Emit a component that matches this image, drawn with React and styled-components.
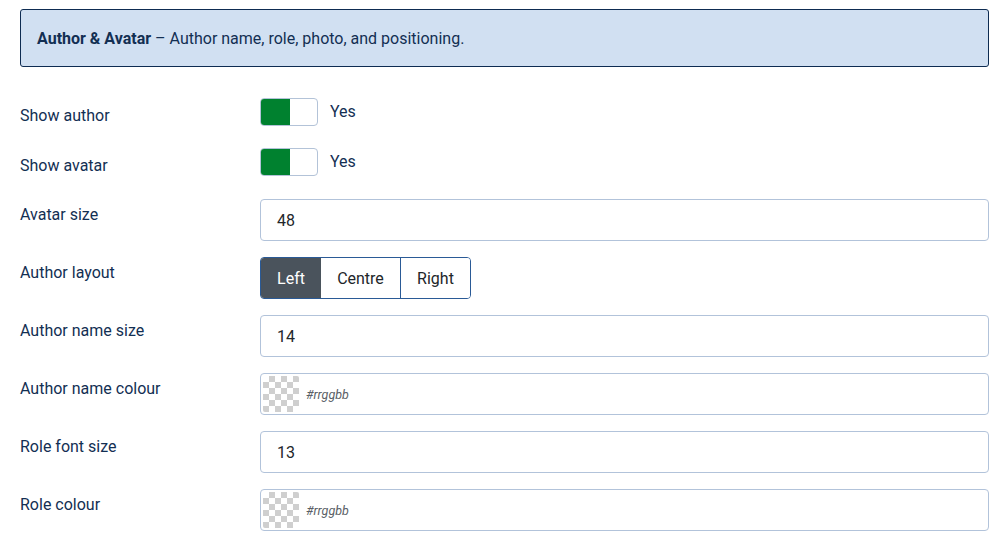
import React from "react";
import styled, { createGlobalStyle } from "styled-components";

const GlobalStyle = createGlobalStyle`
  html, body {
    margin: 0;
    padding: 0;
    background: #fff;
  }
  body {
    font-family: Roboto, "Liberation Sans", sans-serif;
    font-size: 16px;
    color: #132f53;
  }
`;

const Page = styled.div`
  padding: 9px 12px 0 20px;
`;

const Banner = styled.div`
  box-sizing: border-box;
  height: 58px;
  display: flex;
  align-items: center;
  padding: 0 16px;
  background-color: #d1e0f2;
  border: 1px solid #0e2c52;
  border-radius: 3px;
  font-size: 16px;
  color: #132f53;
  margin-bottom: 31px;

  strong {
    font-weight: 700;
  }
`;

const Row = styled.div`
  display: flex;
  align-items: flex-start;
  margin-bottom: ${(p) => p.$gap || 16}px;
`;

const Label = styled.label`
  width: 240px;
  flex: none;
  padding-top: ${(p) => p.$pad}px;
  line-height: 24px;
  font-size: 16px;
  color: #132f53;
`;

const Control = styled.div`
  flex: 1;
  display: flex;
  align-items: center;
`;

const Switch = styled.div`
  box-sizing: border-box;
  width: 58px;
  height: 28px;
  border: 1px solid #b3c3d8;
  border-radius: 4px;
  overflow: hidden;
  display: flex;
`;

const SwitchOn = styled.span`
  width: 29px;
  height: 100%;
  background-color: #00812f;
`;

const SwitchText = styled.span`
  margin-left: 12px;
  font-size: 16px;
  color: #132f53;
  line-height: 28px;
`;

const Input = styled.div`
  box-sizing: border-box;
  width: 100%;
  height: 42px;
  border: 1px solid #b2c3da;
  border-radius: 4px;
  display: flex;
  align-items: center;
  padding: 0 ${(p) => (p.$colour ? 2 : 16)}px;
  font-size: 16px;
  color: #22262a;
  background: #fff;
`;

const Swatch = styled.span`
  width: 36px;
  height: 36px;
  border-radius: 2px;
  background-color: #fff;
  background-image: linear-gradient(45deg, #cfcfcf 25%, transparent 25%),
    linear-gradient(-45deg, #cfcfcf 25%, transparent 25%),
    linear-gradient(45deg, transparent 75%, #cfcfcf 75%),
    linear-gradient(-45deg, transparent 75%, #cfcfcf 75%);
  background-size: 12px 12px;
  background-position: 0 0, 0 6px, 6px -6px, -6px 0;
`;

const Placeholder = styled.span`
  margin-left: 7px;
  font-size: 12.5px;
  font-style: italic;
  color: #5a5f66;
`;

const Group = styled.div`
  display: flex;
  height: 42px;
  border: 1px solid #2a5a96;
  border-radius: 4px;
  overflow: hidden;
  box-sizing: border-box;
`;

const GroupButton = styled.div`
  display: flex;
  align-items: center;
  justify-content: center;
  width: ${(p) => p.$w}px;
  font-size: 16px;
  color: ${(p) => (p.$active ? "#fff" : "#22262a")};
  background-color: ${(p) => (p.$active ? "#4a535c" : "#fff")};
  border-left: ${(p) => (p.$divider ? "1px solid #2a5a96" : "none")};
`;

const ToggleRow = ({ label, gap }) => (
  <Row $gap={gap}>
    <Label $pad={6}>{label}</Label>
    <Control>
      <Switch>
        <SwitchOn />
      </Switch>
      <SwitchText>Yes</SwitchText>
    </Control>
  </Row>
);

const TextRow = ({ label, value }) => (
  <Row>
    <Label $pad={4}>{label}</Label>
    <Control>
      <Input>{value}</Input>
    </Control>
  </Row>
);

const ColourRow = ({ label }) => (
  <Row>
    <Label $pad={4}>{label}</Label>
    <Control>
      <Input $colour>
        <Swatch />
        <Placeholder>#rrggbb</Placeholder>
      </Input>
    </Control>
  </Row>
);

const App = () => {
  return (
    <>
      <GlobalStyle />
      <Page>
        <Banner>
          <span>
            <strong>Author &amp; Avatar</strong> – Author name, role, photo,
            and positioning.
          </span>
        </Banner>
        <ToggleRow label="Show author" gap={20} />
        <ToggleRow label="Show avatar" gap={21} />
        <TextRow label="Avatar size" value="48" />
        <Row>
          <Label $pad={4}>Author layout</Label>
          <Control>
            <Group>
              <GroupButton $w={60} $active>
                Left
              </GroupButton>
              <GroupButton $w={79}>Centre</GroupButton>
              <GroupButton $w={69} $divider>
                Right
              </GroupButton>
            </Group>
          </Control>
        </Row>
        <TextRow label="Author name size" value="14" />
        <ColourRow label="Author name colour" />
        <TextRow label="Role font size" value="13" />
        <ColourRow label="Role colour" />
      </Page>
    </>
  );
};

export default App;
